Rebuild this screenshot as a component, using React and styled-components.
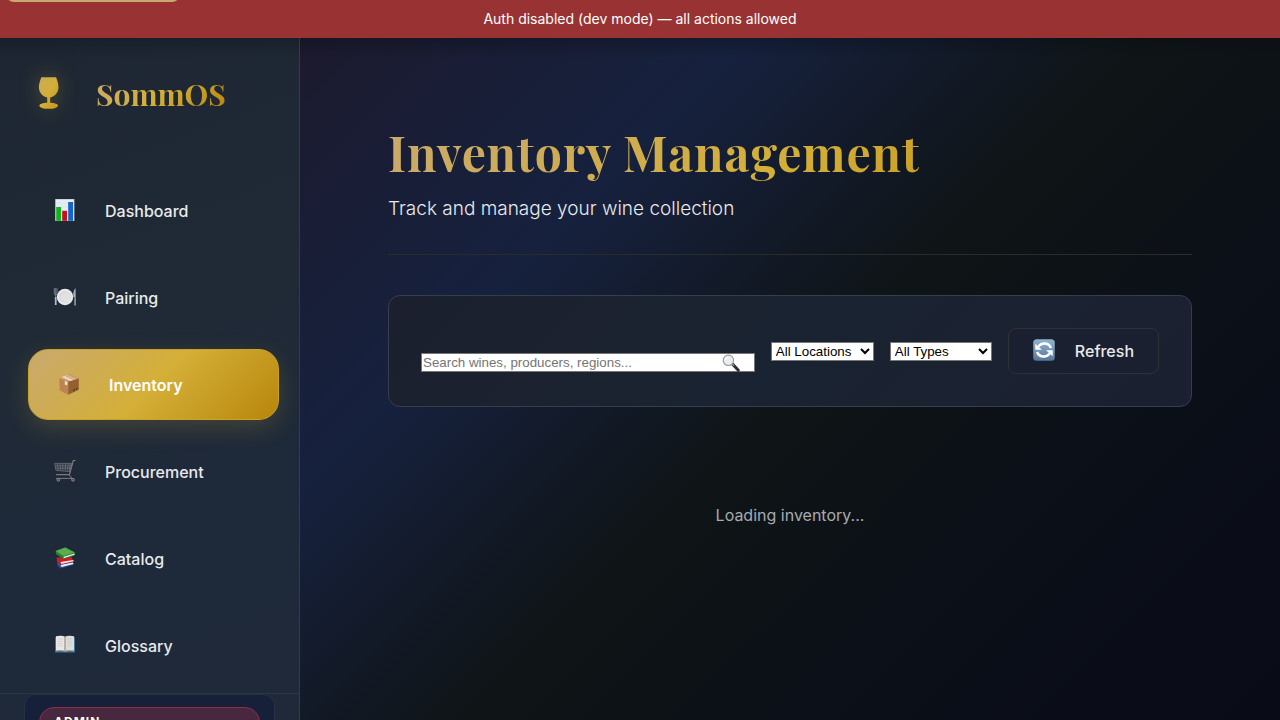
import React from "react";
import styled, { createGlobalStyle, css } from "styled-components";

const gold = "linear-gradient(135deg, #c9a96e 0%, #d4af37 50%, #b8860b 100%)";

const GlobalStyle = createGlobalStyle`
  * { box-sizing: border-box; }
  body {
    margin: 0;
    background: #0a0a14;
    color: #e8eaed;
    font-family: Inter, "Liberation Sans", sans-serif;
    font-size: 16px;
  }
`;

const Shell = styled.div`
  display: flex;
  flex-direction: column;
  height: 100vh;
  overflow: hidden;
`;

const SkipLink = styled.a`
  position: absolute;
  top: 0;
  left: 6px;
  width: 174px;
  height: 36px;
  line-height: 36px;
  text-align: center;
  border-radius: 8px;
  background: #c9a96e;
  color: #0f1419;
  font-size: 14px;
  text-decoration: none;
  transform: translateY(-34px);
  &:focus { transform: none; }
`;

const Banner = styled.div`
  flex: none;
  padding: 8px 16px;
  background: #993333;
  color: #fff;
  font-size: 14px;
  line-height: 22px;
  text-align: center;
`;

const Body = styled.div`
  flex: 1;
  min-height: 0;
  display: flex;
`;

const Sidebar = styled.aside`
  flex: none;
  width: 300px;
  overflow: hidden;
  border-right: 1px solid #333b47;
  background:
    linear-gradient(180deg, rgba(10, 14, 24, 0.3) 0, rgba(10, 14, 24, 0) 20px),
    linear-gradient(160deg, #1d2632 0%, #202a36 40%, #1e293a 70%, #1f2939 100%);
`;

const Brand = styled.div`
  display: flex;
  align-items: flex-start;
  gap: 37px;
  height: 137px;
  padding: 38px 24px 0 38px;
`;

const BrandMark = styled.svg`
  flex: none;
  width: 21px;
  height: 34px;
  filter: drop-shadow(0 0 10px rgba(212, 175, 55, 0.3));
`;

const BrandName = styled.span`
  font-family: "Playfair Display", "Liberation Serif", serif;
  font-size: 30px;
  line-height: 36px;
  font-weight: 700;
  background: ${gold};
  background-clip: text;
  color: transparent;
`;

const Nav = styled.nav`
  display: flex;
  flex-direction: column;
  gap: 16px;
  padding: 0 24px 12px;
`;

const NavItem = styled.button`
  display: flex;
  align-items: center;
  gap: 28px;
  height: 71px;
  padding: 0 28px;
  border: 1px solid transparent;
  border-radius: 20px;
  background: none;
  color: #e8eaed;
  font: 500 16px/24px Inter, sans-serif;
  text-align: left;
  ${(p) =>
    p.$active &&
    css`
      transform: translateX(4px);
      border-color: #c9a227;
      background: ${gold};
      color: #fff;
      font-weight: 600;
      box-shadow: 0 8px 24px rgba(212, 175, 55, 0.2);
    `}
`;

const Icon = styled.svg`
  flex: none;
  width: 24px;
  height: 24px;
  margin-bottom: 2px;
`;

const SidebarFooter = styled.div`
  padding: 0 24px 24px;
  border-top: 1px solid #2b3545;
`;

const UserCard = styled.div`
  padding: 12px 14px;
  border: 1px solid #263145;
  border-radius: 12px;
  background: #162038;
`;

const RoleBadge = styled.div`
  padding: 2px 14px;
  border: 1px solid #8b2f4b;
  border-radius: 20px;
  background: #48283f;
  color: #fff;
  font-size: 12px;
  line-height: 24px;
  font-weight: 700;
  letter-spacing: 1px;
`;

const Main = styled.main`
  flex: 1;
  min-width: 0;
  padding: 88px;
  background:
    linear-gradient(180deg, rgba(8, 10, 16, 0.3) 0, rgba(8, 10, 16, 0) 20px),
    linear-gradient(135deg, #1c1a2e 0%, #16213e 27%, #0f1416 51%, #0b0f18 75%, #090b16 100%);
`;

const PageHeader = styled.header`
  padding-bottom: 30px;
  margin-bottom: 40px;
  border-bottom: 1px solid #2b2b2a;
`;

const Title = styled.h1`
  margin: 0;
  padding-bottom: 6px;
  font-family: "Playfair Display", "Liberation Serif", serif;
  font-size: 48px;
  line-height: 52px;
  font-weight: 700;
  letter-spacing: 1px;
  background: ${gold};
  background-clip: text;
  color: transparent;
`;

const Subtitle = styled.p`
  margin: 10px 0 0;
  font-size: 19px;
  line-height: 30px;
  font-weight: 300;
`;

const Toolbar = styled.form`
  display: flex;
  align-items: center;
  gap: 16px;
  padding: 32px;
  border: 1px solid #353e4b;
  border-radius: 12px;
  background: linear-gradient(135deg, #1c202e 0%, #1a2331 50%, #1b2030 100%);
`;

const SearchField = styled.label`
  position: relative;
  flex: 1;
  min-width: 0;
  display: flex;
  padding-top: 22px;
`;

const SearchInput = styled.input`
  width: 100%;
  height: 19px;
  padding: 1px;
  border: 1px solid #767676;
  background: #fff;
  color: #000;
  font-family: "Liberation Sans", Arial, sans-serif;
  &::placeholder { color: #757575; }
`;

const SearchIcon = styled.svg`
  position: absolute;
  right: 15px;
  bottom: 0;
  width: 18px;
  height: 18px;
`;

const Select = styled.select`
  flex: none;
  width: ${(p) => p.$width};
  height: 19px;
  padding: 0;
  border: 1px solid #767676;
  border-radius: 0;
  background-color: #fff;
  color: #000;
  font-family: "Liberation Sans", Arial, sans-serif;
`;

const RefreshButton = styled.button`
  flex: none;
  display: flex;
  align-items: center;
  gap: 18px;
  height: 46px;
  padding: 0 24px;
  border: 1px solid #2f3235;
  border-radius: 8px;
  background: #1b2030;
  color: #e8eaed;
  font: 500 16px/24px Inter, sans-serif;
`;

const Loading = styled.p`
  margin: 96px 0 0;
  color: #a6abb2;
  font-size: 16px;
  line-height: 24px;
  text-align: center;
`;

const ChartIcon = () => (
  <Icon viewBox="0 0 24 24" aria-hidden="true">
    <rect x="2.2" y="1" width="19.2" height="22" fill="#b9c1c9" />
    <rect x="2.8" y="1.6" width="18" height="20.8" fill="#e6edf7" />
    <path d="M3 5h18M3 9h18M3 13h18M3 17h18" stroke="#d2dbe8" strokeWidth=".5" />
    <rect x="3.2" y="9" width="4.8" height="13.8" fill="#12b51c" />
    <rect x="9.2" y="12.8" width="4.8" height="10" fill="#c8101c" />
    <rect x="15.2" y="4" width="4.8" height="18.8" fill="#1263cc" />
  </Icon>
);

const PlateIcon = () => (
  <Icon viewBox="0 0 24 24" aria-hidden="true">
    <circle cx="12" cy="12" r="8.2" fill="#e9e9e9" />
    <circle cx="12" cy="12" r="5.8" fill="#d3d3d3" />
    <circle cx="12.3" cy="12.3" r="5.1" fill="#e1e1e1" />
    <path d="M1.3 3.2v5.5c0 1.7 2.7 1.7 2.7 0V3.2M2.7 3v16.8" fill="none" stroke="#7d8792" strokeWidth=".9" />
    <path d="M2.7 12v8" stroke="#b3bac2" strokeWidth="1.7" />
    <path d="M22.6 3c-2 1.7-2.6 5.5-2.3 9h1.1v8.4h1.4z" fill="#a7b0b9" />
  </Icon>
);

const BoxIcon = () => (
  <Icon viewBox="0 0 24 24" aria-hidden="true">
    <path d="M2.2 6.4 11.2 9.6v13.2L2.8 18.4z" fill="#bc8452" />
    <path d="M11.2 9.6 21.8 6.2v11.6l-10.6 5z" fill="#95602f" />
    <path d="M2.2 6.4 12 1.6l9.8 4.6-10.6 3.4z" fill="#cc9a6b" />
    <path d="m4.7 5.2 2.9-1.4 8.9 4.1-3.3 1.2z" fill="#ecd6bd" />
    <path d="m8 3.6 2.1-1 9.2 4.3-2.4.8z" fill="#d9b58e" />
    <path d="m7.8 9 2.6.8v3.8l-2.6-1.2z" fill="#eee3d5" />
    <path d="m16.2 17.4 1.7-.8v2l-1.7.8zm2.8-1.3 1.5-.7v2l-1.5.7z" fill="#603915" />
  </Icon>
);

const CartIcon = () => (
  <Icon viewBox="0 0 24 24" aria-hidden="true">
    <g fill="none" stroke="#777a7e" strokeLinejoin="round">
      <path d="M22.5 1.5h-2.2l-3.9 14.1H3.1" strokeWidth="1.2" />
      <path d="M1.6 4.4h17.7l-2.3 8.2L3 11.4zM2 6.2h16.8M2.3 8h16M2.7 9.7h15.2" strokeWidth=".7" />
      <path d="m4.3 4.4.9 7.2M7 4.4l.5 7.3M9.8 4.4v7.5M12.6 4.4l-.4 7.7M15.3 4.4l-.9 7.9M17.4 4.4l-1.2 8" strokeWidth=".7" />
      <path d="m16 15.4 3.5 4.8M3.1 19.4h16" strokeWidth="1" />
    </g>
    <g fill="#4b4240" stroke="#a99284" strokeWidth=".8">
      <circle cx="5.4" cy="20.8" r="1.4" /><circle cx="20" cy="20.8" r="1.4" />
    </g>
  </Icon>
);

const BooksIcon = () => (
  <Icon viewBox="0 0 24 24" aria-hidden="true">
    <path d="m4 17 15-2 2.2 3.4L8 22.6 4.8 20z" fill="#304f9c" />
    <path d="m7.5 19.1 12.4-2.7.5 1.7-11.8 3z" fill="#edf0f2" />
    <path d="m3.7 11.4 14.8-.5 2.3 4.8-13.3 3-3.6-2.6z" fill="#ca1e25" />
    <path d="m7.5 16.1 12.8-2.2.3 1.4-12.4 2.7z" fill="#f2e9e2" />
    <path d="m2.7 5 9.6-3.4 9.5 4.7v3.1L10.7 13 3 8.2z" fill="#278134" />
    <path d="M2.7 5 12.3 1.6l9.3 4.8-11 3.5z" fill="#5aad4b" />
    <path d="m10.6 10.8 11-3.2-.1 1.2-10.8 3.4z" fill="#eceee6" />
  </Icon>
);

const OpenBookIcon = () => (
  <Icon viewBox="0 0 24 24" aria-hidden="true">
    <path d="M2 4h20v15.5H2z" fill="#367895" />
    <path d="M3 3.2c3-.8 6.7-.7 9 .5v14.4c-2.4-1-6-1.1-9-.3z" fill="#e8e7e3" />
    <path d="M21 3.2c-3-.8-6.7-.7-9 .5v14.4c2.4-1 6-1.1 9-.3z" fill="#dedcd8" />
    <path d="M4.8 6h5M4.8 8.3h5M4.8 10.6h5M4.8 12.9h5M14.2 6h5M14.2 8.3h5M14.2 10.6h5M14.2 12.9h5" stroke="#c5c3c1" strokeWidth=".6" />
    <path d="M12 3.7v15" stroke="#8f8984" strokeWidth="1.1" />
    <path d="M3 18c3-.7 6-.6 8.2.2h1.6c2.2-.8 5.2-.9 8.2-.2" fill="none" stroke="#b9a58e" strokeWidth=".8" />
  </Icon>
);

const RefreshIcon = () => (
  <Icon viewBox="1 0 24 24" aria-hidden="true">
    <defs>
      <linearGradient id="refresh-tile" x1="0" y1="0" x2="0" y2="1">
        <stop offset="0" stopColor="#92b3ce" /><stop offset="1" stopColor="#55789a" />
      </linearGradient>
    </defs>
    <rect x="1.2" y="1.2" width="21.6" height="21.6" rx="3.6" fill="url(#refresh-tile)" />
    <g fill="none" stroke="#fff" strokeWidth="2.5">
      <path d="M18.9 10A7 6.8 0 0 0 6.4 8.6" /><path d="M5.1 14a7 6.8 0 0 0 12.5 1.4" />
    </g>
    <path d="M3.3 5.8v6h6.6zM20.7 18.2v-6h-6.6z" fill="#fff" />
  </Icon>
);

const NAV = [
  ["Dashboard", ChartIcon],
  ["Pairing", PlateIcon],
  ["Inventory", BoxIcon],
  ["Procurement", CartIcon],
  ["Catalog", BooksIcon],
  ["Glossary", OpenBookIcon],
];

export default function App() {
  return (
    <>
      <GlobalStyle />
      <Shell>
        <Banner role="status">Auth disabled (dev mode) — all actions allowed</Banner>
        <SkipLink href="#main" aria-label="Skip to main content" />
        <Body>
          <Sidebar>
            <Brand>
              <BrandMark viewBox="0 0 21 34" aria-hidden="true">
                <defs>
                  <linearGradient id="glass" x1="0" y1="0" x2="1" y2="1">
                    <stop offset="0" stopColor="#c9a95a" />
                    <stop offset=".5" stopColor="#d4af37" />
                    <stop offset="1" stopColor="#c4951a" />
                  </linearGradient>
                </defs>
                <path d="M3.3 1.3h14.8c1.2 3 2.4 6.8 2.4 10.2 0 5.2-3.6 8.700-8.300 10.100v5.200c4.500.2 7.800 1.200 7.800 2.900 0 2-4.200 3.100-9.300 3.100s-9.300-1.100-9.300-3.100c0-1.700 3.300-2.700 7.800-2.900v-5.200C4.500 20.200.9 16.700.9 11.500c0-3.400 1.200-7.200 2.400-10.200z" fill="url(#glass)" />
              </BrandMark>
              <BrandName>SommOS</BrandName>
            </Brand>
            <Nav aria-label="Primary">
              {NAV.map(([label, Glyph]) => (
                <NavItem key={label} type="button" $active={label === "Inventory"}>
                  <Glyph />
                  <span>{label}</span>
                </NavItem>
              ))}
            </Nav>
            <SidebarFooter>
              <UserCard>
                <RoleBadge>ADMIN</RoleBadge>
              </UserCard>
            </SidebarFooter>
          </Sidebar>
          <Main id="main">
            <PageHeader>
              <Title>Inventory Management</Title>
              <Subtitle>Track and manage your wine collection</Subtitle>
            </PageHeader>
            <Toolbar onSubmit={(e) => e.preventDefault()}>
              <SearchField>
                <SearchInput type="text" aria-label="Search inventory" placeholder="Search wines, producers, regions..." />
                <SearchIcon viewBox="0 0 18 18" aria-hidden="true">
                  <path d="m10.8 10.4 5.5 5.8" stroke="#2c2e31" strokeWidth="3" strokeLinecap="round" />
                  <path d="m10 9.6 2.1 2.2" stroke="#83888d" strokeWidth="1.6" />
                  <circle cx="6.4" cy="6.3" r="5.2" fill="#e9eef1" stroke="#979da2" strokeWidth="1.2" />
                  <path d="M3.5 6c.1-1.7 1.2-2.7 2.8-2.8" fill="none" stroke="#fff" strokeWidth="1.2" />
                </SearchIcon>
              </SearchField>
              <Select $width="103px" aria-label="Location">
                <option>All Locations</option>
              </Select>
              <Select $width="102px" aria-label="Wine type">
                <option>All Types</option>
              </Select>
              <RefreshButton type="button">
                <RefreshIcon />
                <span>Refresh</span>
              </RefreshButton>
            </Toolbar>
            <Loading>Loading inventory...</Loading>
          </Main>
        </Body>
      </Shell>
    </>
  );
}
